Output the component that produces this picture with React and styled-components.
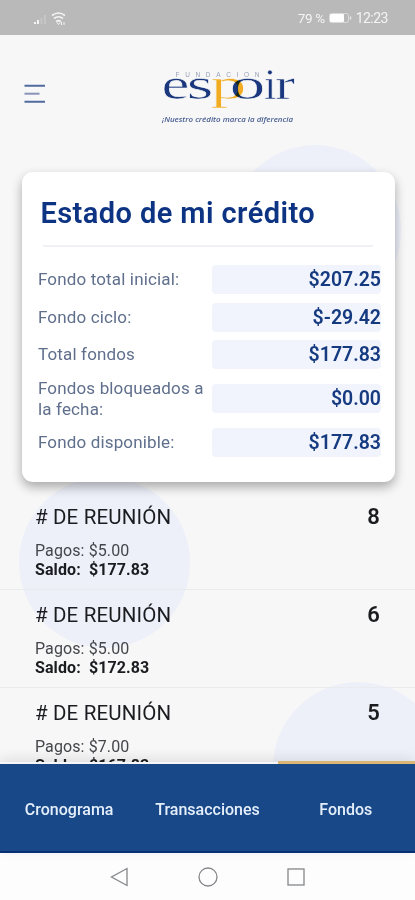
import React from 'react';
import styled, { createGlobalStyle } from 'styled-components';

const GlobalStyle = createGlobalStyle`
    * {
        box-sizing: border-box;
    }
    body {
        margin: 0;
        background: #f7f7f8;
        font-family: Roboto, 'Liberation Sans', sans-serif;
    }
`

const Screen = styled.div`
    position: relative;
    display: flex;
    flex-direction: column;
    width: 415px;
    height: 900px;
    overflow: hidden;
    background: #f7f7f8;
`

// decorative circles behind the content
const Bubble = styled.div`
    position: absolute;
    left: ${props => props.$x}px;
    top: ${props => props.$y}px;
    width: 171px;
    height: 171px;
    border-radius: 50%;
    background: #edf0f9;
`

const StatusBar = styled.div`
    display: flex;
    align-items: center;
    justify-content: space-between;
    flex: none;
    height: 35px;
    padding: 1px 27px 0 33px;
    background: #b9b9b9;
    color: #f4f4f4;
    font-size: 14px;
`

const StatusGroup = styled.div`
    display: flex;
    align-items: center;
    gap: 4px;
`

const Percent = styled.span`
    font-size: 13.5px;
    letter-spacing: -0.4px;
`

const Clock = styled.span`
    letter-spacing: -0.5px;
`

const Header = styled.header`
    display: flex;
    flex: none;
    height: 137px;
    padding: 31px 0 0 24px;
`

const MenuButton = styled.button`
    display: flex;
    width: 22px;
    height: 22px;
    margin: 17px 114px 0 0;
    padding: 0;
    border: 0;
    background: none;
`

const Card = styled.section`
    position: relative;
    flex: none;
    width: 373px;
    height: 310px;
    margin-left: 21.5px;
    padding: 24px 13.5px 0 16.5px;
    border-radius: 11px;
    background: #fff;
    box-shadow: 0 5px 11px rgba(0, 0, 0, 0.32);
`

const CardTitle = styled.h1`
    height: 49px;
    margin: 0 0 0 2.5px;
    color: #0d3383;
    font-size: 29px;
    font-weight: 600;
    line-height: 34px;
    white-space: nowrap;
    letter-spacing: 0.42px;
`

const Rule = styled.div`
    height: 2px;
    margin: 0 8px 14px 5px;
    background: #f0f1f4;
`

const Fund = styled.div`
    display: flex;
    align-items: center;
    justify-content: space-between;
    height: ${props => props.$tall ? 50 : 37.5}px;
`

const FundLabel = styled.span`
    color: #5f6f8c;
    font-size: 17px;
    line-height: 21px;
    white-space: pre;
    letter-spacing: 0.15px;
`

const FundValue = styled.span`
    width: 169px;
    height: 29px;
    border-radius: 4px;
    background: #f1f4fc;
    color: #153a80;
    font-size: 19.5px;
    font-weight: 600;
    line-height: 29px;
    text-align: right;
`

const List = styled.div`
    position: relative;
    flex: none;
    height: 280px;
    padding-top: 10px;
    overflow: hidden;
`

const Meeting = styled.div`
    height: 98px;
    padding: 13px 35px 0;
    border-bottom: 1px solid #eaebef;
    color: #1b1c20;
`

const MeetingHead = styled.div`
    display: flex;
    justify-content: space-between;
    height: 36px;
    font-size: 20.5px;
    line-height: 24px;
    letter-spacing: 0.15px;
`

const MeetingNumber = styled.span`
    font-size: 22px;
    font-weight: 600;
`

const Payment = styled.div`
    color: #44464b;
    font-size: 16px;
    line-height: 19px;
    letter-spacing: 0.1px;
`

const Balance = styled.div`
    font-size: 16px;
    font-weight: 700;
    line-height: 19px;
    white-space: pre;
    letter-spacing: 0.1px;
`

const Tabs = styled.nav`
    position: relative;
    display: grid;
    grid-template-columns: repeat(3, 1fr);
    flex: none;
    height: 91px;
    background: #194889;
    border-top: 2px solid #f6f6f7;
    border-bottom: 2px solid #062f75;
    box-shadow: 0 -3px 12px rgba(0, 0, 0, 0.1);
`

const Tab = styled.div`
    display: flex;
    align-items: center;
    justify-content: center;
    padding-top: 4px;
    color: #e4effb;
    font-size: 16px;
    font-weight: 500;
`

// sits over the top edge of the bar, above the selected tab
const TabMarker = styled.div`
    position: absolute;
    right: 0;
    top: -3px;
    width: 137.5px;
    height: 3px;
    background: #dcb672;
`

const SystemNav = styled.div`
    display: flex;
    flex: 1;
    justify-content: center;
    padding-top: 13px;
    background: #fdfdfd;
`

// white outline plus multiply keeps the wordmark strokes thin where letters overlap
const Letter = styled.text`
    font-family: 'Liberation Serif', serif;
    font-size: 44px;
    fill: ${props => props.$yellow ? '#f9b222' : '#1b3a82'};
    stroke: #fff;
    stroke-width: 0.6px;
    mix-blend-mode: multiply;
`

const LogoFrame = styled.svg`
    overflow: visible;
`

const funds = [
    { label: 'Fondo total inicial:', value: '$207.25' },
    { label: 'Fondo ciclo:', value: '$-29.42' },
    { label: 'Total fondos', value: '$177.83' },
    { label: 'Fondos bloqueados a\nla fecha:', value: '$0.00', tall: true },
    { label: 'Fondo disponible:', value: '$177.83' },
];

const meetings = [
    { number: 8, payment: '$5.00', balance: '$177.83' },
    { number: 6, payment: '$5.00', balance: '$172.83' },
    { number: 5, payment: '$7.00', balance: '$167.83' },
];

const wordmark = [
    { char: 'e', x: 1.5, width: 28 },
    { char: 's', x: 26.5, width: 27 },
    { char: 'o', x: 69.5, width: 36 },
    { char: 'p', x: 50.5, width: 36, yellow: true },
    { char: 'i', x: 104, width: 12.5 },
    { char: 'r', x: 115, width: 20 },
];

function Signal() {
    return (
        <svg width="34" height="16" viewBox="0 0 34 16" fill="none">
            <path d="M2 14v-2M5 14v-4" stroke="#f4f4f4" strokeWidth="2" />
            <path d="M8.5 14V8M12 14V5" stroke="#c6c6c6" strokeWidth="2" />
            <path d="M19 5.5Q25.5 0.5 32 5.5M21 8.5Q25.5 5 30 8.5M23 11.5Q25.5 9.5 28 11.5" stroke="#f4f4f4" strokeWidth="1.6" />
            <path d="M25.5 10.5l1.5 2-1.5 2-1.5-2zM28.5 12v3M31 12v3" stroke="#f4f4f4" strokeWidth="1" />
        </svg>
    )
}

function Battery() {
    return (
        <svg width="23" height="12" viewBox="0 0 23 12" fill="none">
            <rect x="0.5" y="1.5" width="19" height="9" rx="2" stroke="#dadada" />
            <rect x="1" y="2" width="14" height="8" rx="1" fill="#fff" />
            <path d="M21.5 4.5v3" stroke="#e6e6e6" strokeWidth="1.5" />
        </svg>
    )
}

function Logo() {
    return (
        <LogoFrame width="140" height="62" viewBox="0 0 140 62">
            <text x="15.5" y="11" fill="#98a1b4" fontFamily="'Liberation Sans', sans-serif" fontSize="6.5" textLength="84">FUNDACION</text>
            {wordmark.map(letter => (
                <Letter
                    key={letter.char}
                    x={letter.x}
                    y="33"
                    textLength={letter.width}
                    lengthAdjust="spacingAndGlyphs"
                    $yellow={letter.yellow}
                >
                    {letter.char}
                </Letter>
            ))}
            <text x="2" y="55.5" fill="#4b6093" fontFamily="'Open Sans', sans-serif" fontSize="7.8" fontStyle="italic" fontWeight="600" textLength="131" lengthAdjust="spacingAndGlyphs">¡Nuestro crédito marca la diferencia</text>
        </LogoFrame>
    )
}

export default function App() {
    return (
        <Screen>
            <GlobalStyle />
            <Bubble $x={229.5} $y={145} />
            <Bubble $x={19} $y={477} />
            <Bubble $x={273} $y={682} />
            <StatusBar>
                <Signal />
                <StatusGroup>
                    <Percent>79 %</Percent>
                    <Battery />
                    <Clock>12:23</Clock>
                </StatusGroup>
            </StatusBar>
            <Header>
                <MenuButton aria-label="Menú">
                    <svg width="22" height="22" viewBox="0 0 22 22" stroke="#526b9f" strokeWidth="2">
                        <path d="M0.5 2.7h20.5M0.5 18.7h20.5" />
                        <path d="M0.5 10.7h15" stroke="#8793b9" />
                    </svg>
                </MenuButton>
                <Logo />
            </Header>
            <Card>
                <CardTitle>Estado de mi crédito</CardTitle>
                <Rule />
                {funds.map(fund => (
                    <Fund key={fund.label} $tall={fund.tall}>
                        <FundLabel>{fund.label}</FundLabel>
                        <FundValue>{fund.value}</FundValue>
                    </Fund>
                ))}
            </Card>
            <List>
                {meetings.map(meeting => (
                    <Meeting key={meeting.number}>
                        <MeetingHead>
                            <span># DE REUNIÓN</span>
                            <MeetingNumber>{meeting.number}</MeetingNumber>
                        </MeetingHead>
                        <Payment>Pagos: {meeting.payment}</Payment>
                        <Balance>{'Saldo:  ' + meeting.balance}</Balance>
                    </Meeting>
                ))}
            </List>
            <Tabs>
                <TabMarker />
                <Tab>Cronograma</Tab>
                <Tab>Transacciones</Tab>
                <Tab>Fondos</Tab>
            </Tabs>
            <SystemNav>
                <svg width="200" height="24" viewBox="0 0 200 24" fill="none" stroke="#85878a" strokeWidth="1.3">
                    <path d="M19 2.5v17L3.5 11z" />
                    <circle cx="100" cy="11" r="9" />
                    <rect x="180" y="3" width="16" height="16" />
                </svg>
            </SystemNav>
        </Screen>
    )
}
